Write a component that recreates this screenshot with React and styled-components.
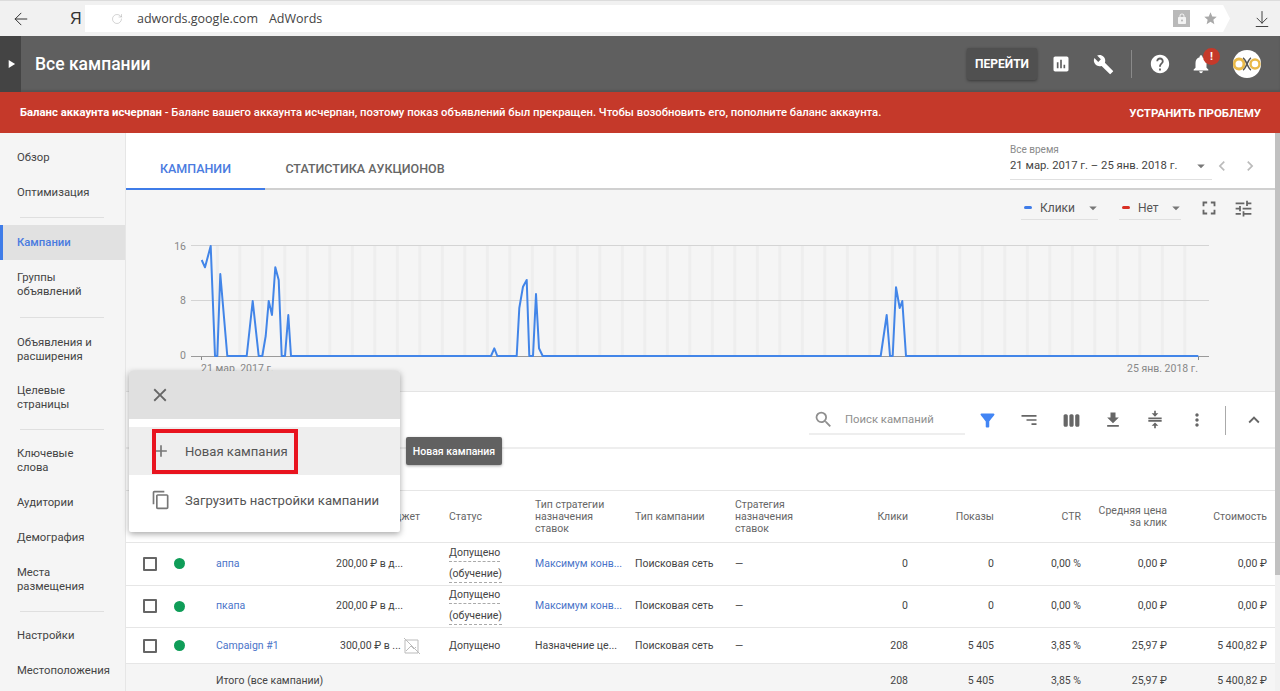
import React from "react";
import styled, { createGlobalStyle } from "styled-components";
import { ArrowLeft, RotateCw, ArrowDownToLine } from "lucide-react";
import {
  MdAdd,
  MdArrowDropDown,
  MdAssessment,
  MdBuild,
  MdChevronLeft,
  MdChevronRight,
  MdClose,
  MdCompress,
  MdContentCopy,
  MdExpandLess,
  MdFileDownload,
  MdFilterAlt,
  MdFullscreen,
  MdHelp,
  MdLock,
  MdMoreVert,
  MdNotifications,
  MdPlayArrow,
  MdSearch,
  MdSort,
  MdStar,
  MdTune,
  MdViewWeek,
} from "react-icons/md";

const GlobalStyle = createGlobalStyle`
  html, body {
    margin: 0;
    padding: 0;
    background: #fff;
    font-family: Roboto, "Liberation Sans", sans-serif;
  }
  * {
    box-sizing: border-box;
  }
`;

const Page = styled.div`
  width: 1280px;
  height: 691px;
  overflow: hidden;
  display: flex;
  flex-direction: column;
`;

const BrowserBar = styled.div`
  height: 36px;
  flex: none;
  background: #f1f1f1;
  border-top: 1px solid #dcdcdc;
  display: flex;
  align-items: center;
  color: #444;
`;

const BackButton = styled.div`
  width: 44px;
  padding-left: 11px;
  display: flex;
  color: #333;
`;

const YandexMark = styled.div`
  width: 41px;
  padding-left: 26px;
  font-family: "Liberation Sans", sans-serif;
  font-size: 16px;
  color: #333;
`;

const AddressBox = styled.div`
  width: 1145px;
  height: 27px;
  background: #fff;
  display: flex;
  align-items: center;
  padding: 0 10px 0 26px;
  font-family: "Open Sans", sans-serif;
  font-size: 12.5px;
  color: #444;
  clip-path: polygon(0 0, 99.4% 0, 100% 50%, 99.4% 100%, 0 100%);
`;

const AddressHost = styled.span`
  margin-left: 14px;
  margin-right: 11px;
`;

const AddressTitle = styled.span`
  flex: 1;
`;

const LockBadge = styled.div`
  width: 17px;
  height: 17px;
  background: #b9b9b9;
  color: #f3f3f3;
  display: flex;
  align-items: center;
  justify-content: center;
  margin-right: 13px;
`;

const StarWrap = styled.div`
  display: flex;
  color: #a9a9a9;
  margin-right: 2px;
`;

const DownloadWrap = styled.div`
  margin-left: 22px;
  display: flex;
  color: #333;
`;

const Header = styled.header`
  height: 56px;
  flex: none;
  background: #5f5f5f;
  display: flex;
  align-items: center;
  color: #fff;
  box-shadow: inset 0 -2px 2px rgba(0, 0, 0, 0.12);
`;

const Handle = styled.div`
  width: 21px;
  align-self: stretch;
  background: #444;
  display: flex;
  align-items: center;
  justify-content: center;
`;

const PageTitle = styled.h1`
  flex: 1;
  margin: 0 0 0 14px;
  font-size: 17.5px;
  font-weight: 500;
`;

const GoButton = styled.div`
  width: 70px;
  height: 32px;
  background: #505050;
  border-radius: 2px;
  box-shadow: 0 1px 3px rgba(0, 0, 0, 0.4);
  font-size: 12px;
  font-weight: 700;
  display: flex;
  align-items: center;
  justify-content: center;
`;

const HeaderIcon = styled.div`
  width: ${(props) => props.$w}px;
  margin-left: ${(props) => props.$ml || 0}px;
  display: flex;
  justify-content: center;
  position: relative;
`;

const HeaderDivider = styled.div`
  width: 1px;
  height: 28px;
  background: #8a8a8a;
  margin: 0 17px 0 16px;
`;

const AlertBadge = styled.div`
  position: absolute;
  top: -5px;
  left: 13px;
  width: 17px;
  height: 17px;
  border-radius: 50%;
  background: #c5392a;
  font-size: 11px;
  font-weight: 700;
  text-align: center;
  line-height: 17px;
`;

const Avatar = styled.div`
  width: 28px;
  height: 28px;
  margin: 0 19px 0 21px;
  border-radius: 50%;
  background: #fff;
  overflow: hidden;
`;

const Banner = styled.div`
  height: 41px;
  flex: none;
  background: #c5392a;
  color: #fff;
  display: flex;
  align-items: center;
  justify-content: space-between;
  padding: 0 19px 0 20px;
  font-size: 11.3px;
  font-weight: 500;
`;

const BannerAction = styled.span`
  font-size: 11.5px;
  font-weight: 700;
`;

const BannerLead = styled.span`
  font-weight: 700;
`;

const Body = styled.div`
  flex: 1;
  min-height: 0;
  display: flex;
`;

const Sidebar = styled.nav`
  width: 126px;
  flex: none;
  background: #f5f5f5;
  border-right: 1px solid #e6e6e6;
  padding-top: 7px;
  font-size: 11.3px;
  line-height: 14px;
  color: #444;
`;

const NavItem = styled.div`
  height: ${(props) => props.$h || 35}px;
  display: flex;
  align-items: center;
  padding-left: 17px;
  padding-right: 20px;
  white-space: pre-line;
  ${(props) =>
    props.$active &&
    `background: #e1e1e1;
     color: #4a7be0;
     font-weight: 500;
     box-shadow: inset 3px 0 0 #3f7ce8;`}
`;

const NavDivider = styled.div`
  height: 1px;
  background: #dfdfdf;
  margin: ${(props) => props.$m || "7px 21px 7px 20px"};
`;

const Main = styled.main`
  flex: 1;
  min-width: 0;
  position: relative;
  display: flex;
  flex-direction: column;
`;

const ScrollTrack = styled.div`
  width: 5px;
  flex: none;
  background: #f1f1f1;
`;

const ScrollThumb = styled.div`
  height: 442px;
  background: #c1c1c1;
`;

const TabsBar = styled.div`
  height: 57px;
  flex: none;
  display: flex;
  align-items: flex-end;
  padding-right: 15px;
  border-bottom: 2px solid #d0d0d0;
`;

const Tab = styled.div`
  width: ${(props) => props.$w}px;
  height: 42px;
  margin-bottom: -2px;
  display: flex;
  align-items: center;
  justify-content: center;
  font-size: 12.5px;
  font-weight: 500;
  color: ${(props) => (props.$active ? "#4a7be0" : "#666")};
  border-bottom: 2px solid ${(props) => (props.$active ? "#3f7ce8" : "transparent")};
`;

const DateBlock = styled.div`
  margin-left: auto;
  align-self: stretch;
  display: flex;
  align-items: flex-start;
  padding-top: 10px;
  color: #bbb;
`;

const DatePicker = styled.div`
  width: 202px;
  height: 37px;
  border-bottom: 1px solid #e0e0e0;
  position: relative;
`;

const DateCaption = styled.div`
  font-size: 10px;
  line-height: 13px;
  color: #8a8a8a;
`;

const DateValue = styled.div`
  margin-top: 3px;
  font-size: 11.3px;
  line-height: 14px;
  color: #444;
`;

const DateCaret = styled.div`
  position: absolute;
  right: 2px;
  top: 14px;
  display: flex;
  color: #777;
`;

const DateArrows = styled.div`
  margin-top: 13px;
  display: flex;
  gap: 8px;
`;

const ChartPanel = styled.section`
  height: 202px;
  flex: none;
  background: #f5f5f5;
  border-bottom: 1px solid #e4e4e4;
  display: flex;
  flex-direction: column;
`;

const ChartControls = styled.div`
  height: 35px;
  flex: none;
  display: flex;
  align-items: center;
  justify-content: flex-end;
  padding: 1px 21px 0 0;
  color: #666;
`;

const SeriesSelect = styled.div`
  width: ${(props) => props.$w}px;
  height: 24px;
  margin-right: ${(props) => props.$mr}px;
  border-bottom: 1px solid #e0e0e0;
  display: flex;
  align-items: center;
  font-size: 12px;
  color: #555;
  position: relative;
`;

const SeriesDash = styled.span`
  width: 8px;
  height: 3px;
  border-radius: 2px;
  background: ${(props) => props.$color};
  margin: 0 8px 0 3px;
`;

const SeriesCaret = styled.span`
  position: absolute;
  right: -4px;
  top: 3px;
  display: flex;
  color: #777;
`;

const ControlGap = styled.span`
  width: 13px;
`;

const ChartSvg = styled.svg`
  display: block;
  flex: none;
`;

const TableArea = styled.div`
  flex: 1;
  min-height: 0;
  overflow: hidden;
`;

const Toolbar = styled.div`
  height: 57px;
  display: flex;
  align-items: center;
  justify-content: flex-end;
  border-bottom: 2px solid #eee;
  color: #666;
  padding-top: 1px;
`;

const SearchField = styled.div`
  width: 156px;
  height: 30px;
  margin-right: 1px;
  border-bottom: 2px solid #eee;
  display: flex;
  align-items: center;
  gap: 11px;
  padding-left: 4px;
  font-size: 11.3px;
  color: #8f8f8f;
`;

const ToolIcon = styled.div`
  width: 42px;
  display: flex;
  justify-content: center;
  color: ${(props) => props.$color || "#666"};
`;

const ToolDivider = styled.div`
  width: 1px;
  height: 29px;
  background: #aaa;
  margin: 0 7px 0 7px;
`;

const FilterGap = styled.div`
  height: 42px;
  border-bottom: 1px solid #e6e6e6;
`;

const Row = styled.div`
  display: grid;
  grid-template-columns: 40px 50px 120px 113px 86px 100px 100px 90px 83px 86px 87px 86px 100px;
  align-items: center;
  height: ${(props) => props.$h}px;
  border-bottom: ${(props) => (props.$plain ? "none" : "1px solid #e6e6e6")};
  background: ${(props) => (props.$total ? "#f5f5f5" : "#fff")};
  font-size: 10.5px;
  color: ${(props) => (props.$head ? "#666" : "#444")};
  line-height: 12px;
`;

const Cell = styled.div`
  text-align: ${(props) => (props.$right ? "right" : "left")};
  padding-left: ${(props) => props.$pl || 0}px;
  white-space: ${(props) => (props.$nowrap ? "nowrap" : "pre-line")};
  display: ${(props) => (props.$flex ? "flex" : "block")};
  align-items: center;
`;

const CampaignLink = styled.span`
  color: #4a74c9;
`;

const Checkbox = styled.div`
  width: 14px;
  height: 14px;
  margin-left: 17px;
  border: 2px solid #666;
  border-radius: 1px;
`;

const StatusDot = styled.div`
  width: 11px;
  height: 11px;
  margin-left: 8px;
  border-radius: 50%;
  background: #0f9d58;
`;

const StatusLine = styled.div`
  width: max-content;
  line-height: 16px;
  border-bottom: 1px dashed #aaa;

  & + & {
    margin-top: 4px;
  }
`;

const NoImage = styled.svg`
  margin-left: 2px;
  flex: none;
`;

const Menu = styled.div`
  position: absolute;
  left: 3px;
  top: 238px;
  width: 271px;
  height: 161px;
  background: #fff;
  border-radius: 2px;
  box-shadow: 0 2px 6px rgba(0, 0, 0, 0.35);
  display: flex;
  flex-direction: column;
`;

const MenuHead = styled.div`
  height: 48px;
  background: #e0e0e0;
  border-radius: 2px 2px 0 0;
  display: flex;
  align-items: center;
  padding-left: 20px;
  color: #666;
  margin-bottom: 8px;
`;

const MenuItem = styled.div`
  height: ${(props) => props.$h}px;
  display: flex;
  align-items: center;
  padding-left: 22px;
  gap: 14px;
  position: relative;
  font-size: 13.1px;
  color: #555;
  background: ${(props) => (props.$hover ? "#eee" : "transparent")};
`;

const RedFrame = styled.div`
  position: absolute;
  left: 23px;
  top: 2px;
  width: 146px;
  height: 45px;
  border: 4px solid #e8141f;
`;

const Tooltip = styled.div`
  position: absolute;
  left: 280px;
  top: 304px;
  width: 96px;
  height: 28px;
  border-radius: 2px;
  background: #616161;
  box-shadow: 0 1px 3px rgba(0, 0, 0, 0.35);
  color: #fff;
  font-size: 10.5px;
  font-weight: 500;
  display: flex;
  align-items: center;
  justify-content: center;
`;

const points =
  "201.7,260 205,267.3 210.7,246 215,356 217.3,356 220.3,274 227.3,356 246.7,356 252.7,301 258.7,356 262.3,356 265.7,336 268.7,301 272,315 275.3,267.3 278.7,280 281.7,356 285,356 288.3,315 291,356 491,356 494.3,348.3 497.3,356 516.7,356 519.3,308 523,286.7 526.7,280 529.3,356 533,356 536,294 539,348.3 542.7,356 880.7,356 886.7,315 890,356 892.7,356 896,287.3 899.7,308 902.3,301 906,356 1198.3,356";

const stripes = Array.from({ length: 44 }, (_, i) => 215.8 + i * 22.5);

const navGroups = [
  { label: "Обзор" },
  { label: "Оптимизация" },
  { divider: true },
  { label: "Кампании", active: true },
  { label: "Группы\nобъявлений", h: 50 },
  { divider: true },
  { label: "Объявления и\nрасширения", h: 49 },
  { label: "Целевые\nстраницы", h: 48 },
  { divider: true },
  { label: "Ключевые\nслова", h: 48 },
  { label: "Аудитории" },
  { label: "Демография" },
  { label: "Места\nразмещения", h: 50 },
  { divider: true, m: "6px 21px 6px 20px" },
  { label: "Настройки" },
  { label: "Местоположения" },
];

const rows = [
  {
    name: "аппа",
    budget: "200,00 ₽ в д...",
    learning: true,
    strategy: "Максимум конв...",
    clicks: "0",
    shows: "0",
    ctr: "0,00 %",
    avg: "0,00 ₽",
    cost: "0,00 ₽",
  },
  {
    name: "пкапа",
    budget: "200,00 ₽ в д...",
    learning: true,
    strategy: "Максимум конв...",
    clicks: "0",
    shows: "0",
    ctr: "0,00 %",
    avg: "0,00 ₽",
    cost: "0,00 ₽",
  },
  {
    name: "Campaign #1",
    budget: "300,00 ₽ в ...",
    limited: true,
    strategy: "Назначение це...",
    plainStrategy: true,
    clicks: "208",
    shows: "5 405",
    ctr: "3,85 %",
    avg: "25,97 ₽",
    cost: "5 400,82 ₽",
    h: 36,
  },
];

function App() {
  return (
    <Page>
      <GlobalStyle />
      <BrowserBar>
        <BackButton>
          <ArrowLeft size={20} strokeWidth={1.2} />
        </BackButton>
        <YandexMark>Я</YandexMark>
        <AddressBox>
          <RotateCw size={12} strokeWidth={1} color="#aaa" />
          <AddressHost>adwords.google.com</AddressHost>
          <AddressTitle>AdWords</AddressTitle>
          <LockBadge>
            <MdLock size={12} />
          </LockBadge>
          <StarWrap>
            <MdStar size={15} />
          </StarWrap>
        </AddressBox>
        <DownloadWrap>
          <ArrowDownToLine size={20} strokeWidth={1.1} />
        </DownloadWrap>
      </BrowserBar>

      <Header>
        <Handle>
          <MdPlayArrow size={14} />
        </Handle>
        <PageTitle>Все кампании</PageTitle>
        <GoButton>ПЕРЕЙТИ</GoButton>
        <HeaderIcon $w={20} $ml={14}>
          <MdAssessment size={20} />
        </HeaderIcon>
        <HeaderIcon $w={24} $ml={20}>
          <MdBuild size={21} />
        </HeaderIcon>
        <HeaderDivider />
        <HeaderIcon $w={22}>
          <MdHelp size={22} />
        </HeaderIcon>
        <HeaderIcon $w={22} $ml={19}>
          <MdNotifications size={22} />
          <AlertBadge>!</AlertBadge>
        </HeaderIcon>
        <Avatar>
          <svg width="28" height="28" viewBox="0 0 28 28">
            <circle cx="6" cy="14" r="5" fill="#fff" stroke="#e9b949" strokeWidth="3" />
            <circle cx="22" cy="14" r="4.5" fill="#fff" stroke="#e9b949" strokeWidth="2.5" />
            <path d="M10 8c3 1 5 11 8 12M18 8c-3 1-5 11-8 12" fill="none" stroke="#555" strokeWidth="1.6" />
          </svg>
        </Avatar>
      </Header>

      <Banner>
        <span>
          <BannerLead>Баланс аккаунта исчерпан</BannerLead> - Баланс вашего аккаунта исчерпан, поэтому показ объявлений был прекращен. Чтобы возобновить его, пополните баланс аккаунта.
        </span>
        <BannerAction>УСТРАНИТЬ ПРОБЛЕМУ</BannerAction>
      </Banner>

      <Body>
        <Sidebar>
          {navGroups.map((item, i) =>
            item.divider ? (
              <NavDivider key={i} $m={item.m} />
            ) : (
              <NavItem key={i} $h={item.h} $active={item.active}>
                {item.label}
              </NavItem>
            )
          )}
        </Sidebar>

        <Main>
          <TabsBar>
            <Tab $w={139} $active>
              КАМПАНИИ
            </Tab>
            <Tab $w={200}>СТАТИСТИКА АУКЦИОНОВ</Tab>
            <DateBlock>
              <DatePicker>
                <DateCaption>Все время</DateCaption>
                <DateValue>21 мар. 2017 г. – 25 янв. 2018 г.</DateValue>
                <DateCaret>
                  <MdArrowDropDown size={18} />
                </DateCaret>
              </DatePicker>
              <DateArrows>
                <MdChevronLeft size={20} />
                <MdChevronRight size={20} />
              </DateArrows>
            </DateBlock>
          </TabsBar>

          <ChartPanel>
            <ChartControls>
              <SeriesSelect $w={77} $mr={21}>
                <SeriesDash $color="#3f7ce8" />
                Клики
                <SeriesCaret>
                  <MdArrowDropDown size={18} />
                </SeriesCaret>
              </SeriesSelect>
              <SeriesSelect $w={62} $mr={17}>
                <SeriesDash $color="#d93025" />
                Нет
                <SeriesCaret>
                  <MdArrowDropDown size={18} />
                </SeriesCaret>
              </SeriesSelect>
              <MdFullscreen size={22} />
              <ControlGap />
              <MdTune size={21} />
            </ChartControls>
            <ChartSvg width="1149" height="165" viewBox="126 225 1149 165">
              {stripes.map((x) => (
                <rect key={x} x={x} y="246" width="3" height="110" fill="#eeeeee" />
              ))}
              <path d="M191 245.5H1209M191 300.5H1209" stroke="#d4d4d4" strokeWidth="1" />
              <path d="M191 356.5H1209" stroke="#9a9a9a" strokeWidth="1" />
              <path d="M201.5 357v3M1198.5 357v3" stroke="#888" strokeWidth="1" />
              <polyline
                points={points}
                fill="none"
                stroke="#4285e8"
                strokeWidth="2"
                strokeLinejoin="round"
              />
              <g fontFamily="Roboto, sans-serif" fontSize="10.5" fill="#888">
                <text x="186" y="250" textAnchor="end">16</text>
                <text x="186" y="304" textAnchor="end">8</text>
                <text x="186" y="359" textAnchor="end">0</text>
                <text x="201" y="372">21 мар. 2017 г.</text>
                <text x="1198" y="372" textAnchor="end">25 янв. 2018 г.</text>
              </g>
            </ChartSvg>
          </ChartPanel>

          <TableArea>
            <Toolbar>
              <SearchField>
                <MdSearch size={21} />
                Поиск кампаний
              </SearchField>
              <ToolIcon $color="#4285f4">
                <MdFilterAlt size={21} />
              </ToolIcon>
              <ToolIcon>
                <MdSort size={20} style={{ transform: "scaleX(-1)" }} />
              </ToolIcon>
              <ToolIcon>
                <MdViewWeek size={19} />
              </ToolIcon>
              <ToolIcon>
                <MdFileDownload size={20} />
              </ToolIcon>
              <ToolIcon>
                <MdCompress size={20} />
              </ToolIcon>
              <ToolIcon>
                <MdMoreVert size={20} />
              </ToolIcon>
              <ToolDivider />
              <ToolIcon>
                <MdExpandLess size={22} />
              </ToolIcon>
            </Toolbar>
            <FilterGap />
            <Row $h={52} $head>
              <Cell />
              <Cell />
              <Cell>Кампания</Cell>
              <Cell $pl={44}>Бюджет</Cell>
              <Cell>Статус</Cell>
              <Cell>{"Тип стратегии\nназначения\nставок"}</Cell>
              <Cell>Тип кампании</Cell>
              <Cell>{"Стратегия\nназначения\nставок"}</Cell>
              <Cell $right>Клики</Cell>
              <Cell $right>Показы</Cell>
              <Cell $right>CTR</Cell>
              <Cell $right>{"Средняя цена\nза клик"}</Cell>
              <Cell $right>Стоимость</Cell>
            </Row>
            {rows.map((row) => (
              <Row key={row.name} $h={row.h || 42.5}>
                <Checkbox />
                <StatusDot />
                <Cell>
                  <CampaignLink>{row.name}</CampaignLink>
                </Cell>
                <Cell $flex $pl={row.limited ? 4 : 0}>
                  {row.budget}
                  {row.limited && (
                    <NoImage width="18" height="18" viewBox="0 0 18 18">
                      <path
                        d="M2 3h13v13H2zM1 1l16 16M3 14l5-5 3 3 2-2"
                        fill="none"
                        stroke="#bbb"
                        strokeWidth="1"
                      />
                    </NoImage>
                  )}
                </Cell>
                <Cell>
                  {row.learning ? (
                    <>
                      <StatusLine>Допущено</StatusLine>
                      <StatusLine>(обучение)</StatusLine>
                    </>
                  ) : (
                    "Допущено"
                  )}
                </Cell>
                <Cell>
                  {row.plainStrategy ? row.strategy : <CampaignLink>{row.strategy}</CampaignLink>}
                </Cell>
                <Cell>Поисковая сеть</Cell>
                <Cell>—</Cell>
                <Cell $right>{row.clicks}</Cell>
                <Cell $right>{row.shows}</Cell>
                <Cell $right>{row.ctr}</Cell>
                <Cell $right>{row.avg}</Cell>
                <Cell $right>{row.cost}</Cell>
              </Row>
            ))}
            <Row $h={34} $total $plain>
              <Cell />
              <Cell />
              <Cell $nowrap>Итого (все кампании)</Cell>
              <Cell />
              <Cell />
              <Cell />
              <Cell />
              <Cell />
              <Cell $right>208</Cell>
              <Cell $right>5 405</Cell>
              <Cell $right>3,85 %</Cell>
              <Cell $right>25,97 ₽</Cell>
              <Cell $right>5 400,82 ₽</Cell>
            </Row>
          </TableArea>

          <Menu>
            <MenuHead>
              <MdClose size={22} />
            </MenuHead>
            <MenuItem $h={48} $hover>
              <MdAdd size={20} color="#777" />
              Новая кампания
              <RedFrame />
            </MenuItem>
            <MenuItem $h={50}>
              <MdContentCopy size={20} color="#777" />
              Загрузить настройки кампании
            </MenuItem>
          </Menu>
          <Tooltip>Новая кампания</Tooltip>
        </Main>
        <ScrollTrack>
          <ScrollThumb />
        </ScrollTrack>
      </Body>
    </Page>
  );
}

export default App;
